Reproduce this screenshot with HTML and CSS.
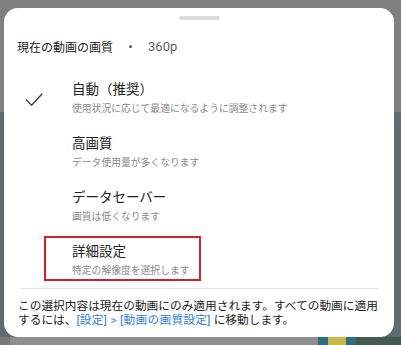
FILE: index.html
```html
<!DOCTYPE html>
<html lang="ja">
<head>
    <meta charset="UTF-8">
    <meta name="viewport" content="width=device-width, initial-scale=1.0">
    <title>画質</title>
    <link rel="stylesheet" href="styles.css">
</head>
<body>
    <div class="sheet">
        <div class="handle"></div>

        <div class="current">
            <span>現在の動画の画質</span>
            <span class="dot"></span>
            <span class="res">360p</span>
        </div>

        <ul class="options">
            <li class="option">
                <div class="check">
                    <svg width="18" height="13" viewBox="0 0 18 13">
                        <path d="M0.8 6.4 L6.6 12.2 L17.2 0.8" fill="none" stroke="#333" stroke-width="1.3"/>
                    </svg>
                </div>
                <div class="text">
                    <div class="title">自動（推奨）</div>
                    <div class="desc">使用状況に応じて最適になるように調整されます</div>
                </div>
            </li>
            <li class="option">
                <div class="check"></div>
                <div class="text">
                    <div class="title">高画質</div>
                    <div class="desc">データ使用量が多くなります</div>
                </div>
            </li>
            <li class="option">
                <div class="check"></div>
                <div class="text">
                    <div class="title">データセーバー</div>
                    <div class="desc">画質は低くなります</div>
                </div>
            </li>
            <li class="option marked">
                <div class="check"></div>
                <div class="text">
                    <div class="title">詳細設定</div>
                    <div class="desc">特定の解像度を選択します</div>
                </div>
                <span class="mark"></span>
            </li>
        </ul>

        <div class="divider"></div>

        <div class="note">
            <div class="line">この選択内容は現在の動画にのみ適用されます。すべての動画に適用</div>
            <div class="line">するには、<span class="link">[設定] &gt; [動画の画質設定]</span> に移動します。</div>
        </div>
    </div>
</body>
</html>
```

FILE: styles.css
```css
body {
    margin: 0;
    height: 345px;
    overflow: hidden;
    font-family: Roboto, "Noto Sans CJK JP", sans-serif;
    background:
        linear-gradient(#7f7f7f, #7f7f7f) 0 0 / 100% 112px no-repeat,
        linear-gradient(90deg, #787878 0 10px, #8d8d8d 10px 318px, #2d6f7e 318px 328px, #c9b84a 328px 346px, #2d6f7e 346px 356px, #46594f 356px) 0 337px / 100% 8px no-repeat,
        #606b70;
    padding-top: 8px;
}

.sheet {
    background: white;
    width: 390px;
    margin-left: 4px;
    height: 329px;
    box-sizing: border-box;
    border-radius: 14px;
    padding-top: 8px;
}

.handle {
    width: 41px;
    height: 4px;
    margin: 0 auto;
    border-radius: 2px;
    background: #dcdcdc;
}

.current {
    display: flex;
    align-items: center;
    margin-top: 16px;
    padding-left: 13px;
    height: 20px;
    font-size: 12px;
    color: #212121;
}

.dot {
    width: 3px;
    height: 3px;
    border-radius: 50%;
    background: #555;
    margin-left: 16px;
}

.res {
    margin-left: 16px;
    font-size: 13px;
    color: #5f5f5f;
}

.options {
    list-style: none;
    margin: 16px 0 0;
    padding: 0;
}

.option {
    position: relative;
    display: flex;
    align-items: center;
    height: 54px;
    box-sizing: border-box;
    padding: 7px 0;
}

.check {
    width: 68px;
    flex-shrink: 0;
    padding-left: 21px;
    box-sizing: border-box;
    display: flex;
    padding-top: 1px;
}

.title {
    font-size: 13.5px;
    line-height: 20px;
    color: #212121;
}

.desc {
    font-size: 9.8px;
    line-height: 20px;
    color: #8a8a8a;
}

.mark {
    position: absolute;
    left: 40px;
    top: 2px;
    width: 157px;
    height: 45px;
    box-sizing: border-box;
    border: 2px solid #d2202c;
}

.divider {
    height: 1px;
    margin: 0 16px 0 17px;
    background: #e4e4e4;
}

.note {
    padding: 11px 0 0 14px;
    font-size: 11.7px;
    line-height: 13.5px;
    color: #212121;
    white-space: nowrap;
}

.link {
    color: #2f7de1;
    letter-spacing: 0.3px;
}
```
